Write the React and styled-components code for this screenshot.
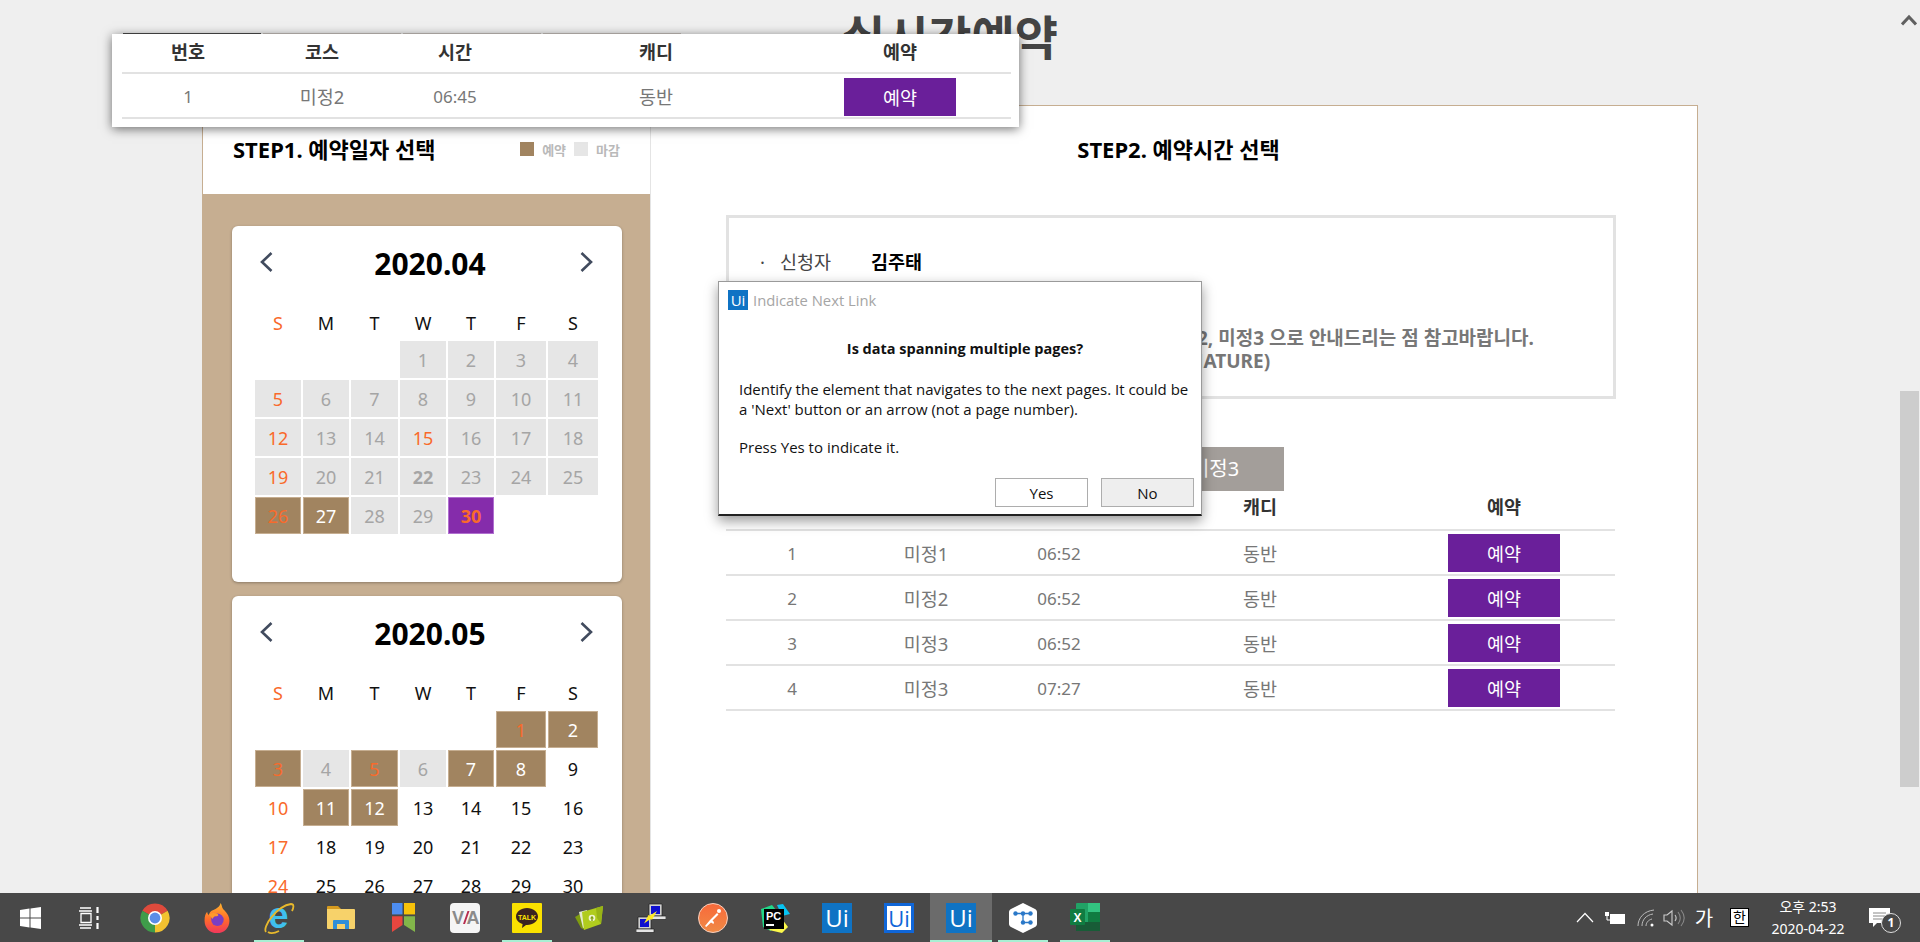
import React from 'react';
import styled, { createGlobalStyle } from 'styled-components';

const GlobalStyle = createGlobalStyle`
  html, body {
    margin: 0;
    height: 100%;
    overflow: hidden;
  }
  body {
    font-family: "Noto Sans", "Noto Sans CJK KR", sans-serif;
    background: #efefef;
  }
`;

const months = [
  { title: '2020.04', offset: 3, total: 30, open: [26, 27], closed: 'rest', today: 30, red: [5, 12, 15, 19, 26, 30], bold: [22] },
  { title: '2020.05', offset: 5, total: 31, open: [1, 2, 3, 5, 7, 8, 11, 12], closed: [4, 6], red: [1, 3, 5, 10, 17, 24, 31], bold: [] },
];

const weekdays = ['S', 'M', 'T', 'W', 'T', 'F', 'S'];

const rows = [
  ['1', '미정1', '06:52'],
  ['2', '미정2', '06:52'],
  ['3', '미정3', '06:52'],
  ['4', '미정3', '07:27'],
];

const cellKind = (month, day) => {
  if (month.today === day) return 'today';
  if (month.open.includes(day)) return 'open';
  if (month.closed === 'rest' || month.closed.includes(day)) return 'closed';
  return 'plain';
};

const Calendar = ({ month }) => {
  const days = Array.from({ length: month.total }, (_, i) => i + 1);
  return (
    <Card>
      <MonthHead>
        <Arrow viewBox="0 0 13 20"><path d="M11.5 1 2 10l9.5 9" /></Arrow>
        <MonthTitle>{month.title}</MonthTitle>
        <Arrow viewBox="0 0 13 20"><path d="M1.5 1 11 10l-9.5 9" /></Arrow>
      </MonthHead>
      <WeekRow>
        {weekdays.map((d, i) => (
          <WeekDay key={i} $red={i === 0}>{d}</WeekDay>
        ))}
      </WeekRow>
      <DayGrid>
        {Array.from({ length: month.offset }, (_, i) => <span key={i} />)}
        {days.map((day) => (
          <Day
            key={day}
            $kind={cellKind(month, day)}
            $red={month.red.includes(day)}
            $bold={month.bold.includes(day)}
          >
            {day}
          </Day>
        ))}
      </DayGrid>
    </Card>
  );
};

const ReserveTable = ({ data }) => (
  <Table>
    <HeadRow>
      <span>번호</span>
      <span>코스</span>
      <span>시간</span>
      <span>캐디</span>
      <span>예약</span>
    </HeadRow>
    {data.map((row) => (
      <BodyRow key={row[0] + row[1] + row[2]}>
        <span>{row[0]}</span>
        <Korean>{row[1]}</Korean>
        <span>{row[2]}</span>
        <Korean>동반</Korean>
        <ReserveButton>예약</ReserveButton>
      </BodyRow>
    ))}
  </Table>
);

/* taskbar icons */
const WindowsIcon = () => (
  <svg width="22" height="24" viewBox="0 0 22 24">
    <path fill="#fff" d="M0 4l9.500-1.400V11.400H0zM10.500 2.400 21 1v10.400H10.500zM0 12.600h9.500v8.800L0 20zM10.500 12.600H21V23l-10.500-1.400z" />
  </svg>
);
const TaskViewIcon = () => (
  <svg width="28" height="24" viewBox="0 0 28 24" fill="none" stroke="#fff" strokeWidth="1.3">
    <path d="M1 2h11M1 22h11M2 7.500h10v9H2zM0 5h13M0 19h13" />
    <path d="M18.500 1v6M18.500 10v4M18.500 17v6" strokeWidth="2.2" />
  </svg>
);
const ChromeIcon = () => (
  <svg width="30" height="30" viewBox="0 0 30 30">
    <path d="M15 15 2.400 7.750A14.500 14.500 0 0 1 27.600 7.750z" fill="#de4a3c" />
    <path d="M15 15 27.600 7.750A14.500 14.500 0 0 1 15 29.500z" fill="#f2c230" />
    <path d="M15 15 15 29.500A14.500 14.500 0 0 1 2.400 7.750z" fill="#3f9c4a" />
    <circle cx="15" cy="15" r="7" fill="#fff" />
    <circle cx="15" cy="15" r="5.400" fill="#5a8de8" />
  </svg>
);
const FirefoxIcon = () => (
  <svg width="30" height="32" viewBox="0 0 30 36">
    <defs>
      <linearGradient id="fx" x1="0" y1="0" x2="0" y2="1">
        <stop offset="0" stopColor="#ffb52e" />
        <stop offset="0.55" stopColor="#ff6b2b" />
        <stop offset="1" stopColor="#f0375c" />
      </linearGradient>
    </defs>
    <path fill="url(#fx)" d="M19 1c2 3 1 5 4 8 4 4 6 8 6 12 0 8-6 14-14 14S1 29 1 21c0-5 1-8 3-10 0 2 1 3 2 4 0-3 2-5 5-6 3-2 7-3 8-8z" />
    <circle cx="15.500" cy="20" r="7" fill="#7b3ec2" />
    <path fill="#ff9a2b" d="M6 14c3-2 6-2 9-1 2 1 2 3 0 3-2 0-4 0-5 3-1-2-3-3-4-5z" />
  </svg>
);
const IeIcon = () => (
  <svg width="32" height="32" viewBox="0 0 32 32">
    <text x="15.500" y="26" textAnchor="middle" fontFamily="Liberation Sans, sans-serif" fontWeight="700" fontSize="36" fill="#3fc0ee">e</text>
    <path fill="none" stroke="#e8b92c" strokeWidth="1.800" d="M3 30C-1 25 14 4 28 2c3 0 3 3 1 7M5 30c3 2 7 1 11-1" />
  </svg>
);
const FolderIcon = () => (
  <svg width="28" height="23" viewBox="0 0 28 23">
    <path fill="#d69a1e" d="M0 1a1 1 0 0 1 1-1h10l3 3H0z" />
    <path fill="#f7d26a" d="M0 3h27a1 1 0 0 1 1 1v18a1 1 0 0 1-1 1H1a1 1 0 0 1-1-1z" />
    <path fill="#2f8fd8" d="M6 15a1 1 0 0 1 1-1h14a1 1 0 0 1 1 1v8h-4v-5h-8v5H6z" />
  </svg>
);
const TilesIcon = () => (
  <svg width="23" height="29" viewBox="0 0 23 33" preserveAspectRatio="none">
    <rect width="10.500" height="13" fill="#4d8df0" />
    <rect x="12" width="11" height="13" fill="#f7c20a" />
    <path fill="#e8463f" d="M0 15h10.500v10L0 33z" />
    <path fill="#82b64a" d="M12 15h11v18l-11-8z" />
  </svg>
);
const ViaIcon = () => (
  <IconSquare $bg="#f5f5f5" $radius="4px">
    <svg width="30" height="30" viewBox="0 0 30 30">
      <text x="2" y="21" fontFamily="Liberation Sans, sans-serif" fontWeight="700" fontSize="18" fill="#8b8b8b">V</text>
      <path d="M17.500 8 13 21h2l4.500-13z" fill="#b72d50" />
      <text x="16.500" y="21" fontFamily="Liberation Sans, sans-serif" fontWeight="700" fontSize="18" fill="#8b8b8b">A</text>
    </svg>
  </IconSquare>
);
const TalkIcon = () => (
  <IconSquare $bg="#fae100" $radius="1px">
    <svg width="30" height="30" viewBox="0 0 30 30">
      <path fill="#3b2320" d="M15 5c6 0 11 3.700 11 8.500S21 22 15 22l-1 0-4 3 .6-4C6.500 19.700 4 17 4 13.500 4 8.700 9 5 15 5z" />
      <text x="15" y="16.500" textAnchor="middle" fontFamily="Liberation Sans, sans-serif" fontWeight="700" fontSize="7" fill="#fae100">TALK</text>
    </svg>
  </IconSquare>
);
const GreenFolderIcon = () => (
  <svg width="28" height="24" viewBox="0 0 28 24">
    <path fill="#7f9c10" d="M0 11l5-3 5 16-4-2z" />
    <path fill="#e3e9cf" d="M4 6l8-2 3 16-7 2z" />
    <path fill="#b0cc1e" d="M7 6l14-4 7-2-2 18-17 6z" />
    <path fill="#98b416" d="M21 2l7-2-2 18-4-6z" />
    <circle cx="17" cy="12" r="3.300" fill="#eef4cf" />
    <path fill="#7f9c10" d="M17 9.700l-2 2.800h1.300V15h1.400v-2.500H19z" />
  </svg>
);
const NetworkIcon = () => (
  <svg width="30" height="30" viewBox="0 0 30 30">
    <path fill="#d0d0d0" stroke="#222" strokeWidth="0.7" d="M13 1h13v12H13z" />
    <rect x="15" y="3" width="9" height="8" fill="#0f0fd0" />
    <path fill="#e4e4e4" stroke="#222" strokeWidth="0.7" d="M15 13h15v3.500H15z" />
    <path fill="#d0d0d0" stroke="#222" strokeWidth="0.7" d="M2 14h13v12H2z" />
    <rect x="4" y="16" width="9" height="8" fill="#0f0fd0" />
    <path fill="#e4e4e4" stroke="#222" strokeWidth="0.7" d="M0 26h18v3.500H0z" />
    <path fill="#ffe926" d="M21 8l-7 4.500-1.500-.5L8 20.500l6.500-4.500 1.500.7z" />
  </svg>
);
const PostmanIcon = () => (
  <svg width="30" height="30" viewBox="0 0 30 30">
    <defs>
      <linearGradient id="pm" x1="0" y1="0" x2="0" y2="1">
        <stop offset="0" stopColor="#f8693a" />
        <stop offset="1" stopColor="#f08a45" />
      </linearGradient>
    </defs>
    <circle cx="15" cy="15" r="14.500" fill="url(#pm)" stroke="#f8d0bf" />
    <circle cx="21" cy="8" r="2" fill="#fff" />
    <path fill="#fff" d="M19 10l-7 7-5 6 1.200 1 4.800-4.500 2.500 1.500.5-2-1.500-1.500 6-6z" />
  </svg>
);
const PyCharmIcon = () => (
  <svg width="30" height="30" viewBox="0 0 30 30">
    <path fill="#21d789" d="M1 6l11-4 4 5-5 21-8-4z" />
    <path fill="#fcf84a" d="M9 27l13 3 6-6-6-8z" />
    <path fill="#07c3f2" d="M17 2l6-1 7 10-8 2z" />
    <rect x="4" y="6" width="20" height="20" fill="#000" />
    <text x="6" y="17" fontFamily="Liberation Sans, sans-serif" fontWeight="700" fontSize="11" fill="#fff">PC</text>
    <rect x="6" y="21" width="8" height="2" fill="#fff" />
  </svg>
);
const UiIcon = ({ $framed }) => (
  <UiSquare $framed={$framed}>
    <UiLetters $framed={$framed}>Ui</UiLetters>
  </UiSquare>
);
const HexIcon = () => (
  <svg width="28" height="30" viewBox="0 0 28 30">
    <path fill="#fff" d="M14 0l12 6c1 .6 2 1.500 2 3v12c0 1.500-1 2.400-2 3l-12 6-12-6c-1-.6-2-1.500-2-3V9c0-1.500 1-2.400 2-3z" />
    <g fill="#2a78c8">
      <circle cx="6.500" cy="10.500" r="2.200" /><circle cx="14" cy="10.500" r="2.200" /><circle cx="21.500" cy="10.500" r="2.200" />
      <circle cx="14" cy="19.500" r="2.200" /><circle cx="21.500" cy="19.500" r="2.200" />
    </g>
    <path stroke="#2a78c8" strokeWidth="1.300" fill="none" d="M6.500 10.500h15M14 10.500v9h7.500" />
  </svg>
);
const ExcelIcon = () => (
  <svg width="30" height="30" viewBox="0 0 30 30">
    <rect x="6" y="0" width="24" height="28" rx="1" fill="#21a366" />
    <rect x="18" y="0" width="12" height="9" fill="#33c481" />
    <rect x="6" y="19" width="24" height="9" fill="#185c37" />
    <rect x="18" y="9" width="12" height="10" fill="#107c41" />
    <rect x="0" y="6" width="15" height="16" rx="1" fill="#107c41" />
    <text x="7.500" y="19" textAnchor="middle" fontFamily="Liberation Sans, sans-serif" fontWeight="700" fontSize="12" fill="#fff">X</text>
  </svg>
);

const taskItems = [
  { id: 'win', icon: <WindowsIcon /> },
  { id: 'view', icon: <TaskViewIcon /> },
  { id: 'chrome', icon: <ChromeIcon /> },
  { id: 'firefox', icon: <FirefoxIcon /> },
  { id: 'ie', icon: <IeIcon />, running: true },
  { id: 'folder', icon: <FolderIcon /> },
  { id: 'tiles', icon: <TilesIcon /> },
  { id: 'via', icon: <ViaIcon /> },
  { id: 'talk', icon: <TalkIcon />, running: true },
  { id: 'green', icon: <GreenFolderIcon /> },
  { id: 'network', icon: <NetworkIcon /> },
  { id: 'postman', icon: <PostmanIcon /> },
  { id: 'pycharm', icon: <PyCharmIcon /> },
  { id: 'ui1', icon: <UiIcon /> },
  { id: 'ui2', icon: <UiIcon $framed /> },
  { id: 'ui3', icon: <UiIcon />, running: true, active: true },
  { id: 'hex', icon: <HexIcon />, running: true },
  { id: 'excel', icon: <ExcelIcon />, running: true },
];

const App = () => (
  <Shell>
    <GlobalStyle />
    <Viewport>
      <Page>
        <PageTitle>실시간예약</PageTitle>
        <Panel>
          <LeftColumn>
            <LeftHead>
              <StepTitle>STEP1. 예약일자 선택</StepTitle>
              <Legend>
                <Swatch $color="#a18460" />
                <span>예약</span>
                <Swatch $color="#e6e6e6" />
                <span>마감</span>
              </Legend>
            </LeftHead>
            <CalendarArea>
              {months.map((m) => (
                <Calendar key={m.title} month={m} />
              ))}
            </CalendarArea>
          </LeftColumn>
          <RightColumn>
            <RightTitle>STEP2. 예약시간 선택</RightTitle>
            <InfoBox>
              <Applicant>
                <Bullet>·</Bullet>
                <span>신청자</span>
                <strong>김주태</strong>
              </Applicant>
              <Notice $indent="468px">2, 미정3 으로 안내드리는 점 참고바랍니다.</Notice>
              <Notice $indent="459px">NATURE)</Notice>
            </InfoBox>
            <TabRow>
              <Tab>미정1</Tab>
              <Tab>미정2</Tab>
              <Tab>미정3</Tab>
              <Tab>미정3</Tab>
            </TabRow>
            <ReserveTable data={rows} />
          </RightColumn>
        </Panel>
      </Page>
      <ScrollTrack>
        <ScrollUp viewBox="0 0 16 12"><path d="M1 10.500 8 3l7 7.500" /></ScrollUp>
        <ScrollThumb />
      </ScrollTrack>
    </Viewport>
    <Taskbar>
      <TaskIcons>
        {taskItems.map((item) => (
          <TaskSlot key={item.id} $running={item.running} $active={item.active}>
            {item.icon}
          </TaskSlot>
        ))}
      </TaskIcons>
      <Tray>
        <TrayItem $w="26px">
          <svg width="18" height="11" viewBox="0 0 18 11" fill="none" stroke="#fff" strokeWidth="1.200"><path d="M1 10 9 1.500 17 10" /></svg>
        </TrayItem>
        <TrayItem $w="34px">
          <svg width="21" height="14" viewBox="0 0 21 14"><path fill="#fff" d="M5 3h15v10H5zM0 1h4v4H0z" /><path stroke="#fff" fill="none" d="M2 5v4h3" /></svg>
        </TrayItem>
        <TrayItem $w="28px">
          <svg width="18" height="18" viewBox="0 0 18 18" fill="none" stroke="#bbb" strokeWidth="1"><path d="M1 17C1 9 7 2 17 1M5 17c0-6 4-11 11-12M9 17c0-3 2-6 6-7" /><circle cx="15" cy="16" r="1.500" fill="#fff" stroke="none" /></svg>
        </TrayItem>
        <TrayItem $w="28px">
          <svg width="22" height="18" viewBox="0 0 22 18" fill="none" stroke="#ccc" strokeWidth="1.100"><path d="M1 6h3l5-4v14l-5-4H1z" /><path d="M12 6c1.500 2 1.500 4 0 6" /><path stroke="#888" d="M15 3c3 4 3 8 0 12M18 1c4 5 4 11 0 16" /></svg>
        </TrayItem>
        <ImeLabel>가</ImeLabel>
        <ImeBox>한</ImeBox>
        <Clock>
          <span>오후 2:53</span>
          <span>2020-04-22</span>
        </Clock>
        <NotifyCell>
          <svg width="21" height="19" viewBox="0 0 21 19"><path fill="#fff" d="M0 0h21v15H8l-4 4v-4H0z" /><path stroke="#888" d="M4 5h13M4 8h13M4 11h9" /></svg>
          <NotifyBadge>1</NotifyBadge>
        </NotifyCell>
      </Tray>
    </Taskbar>

    <FloatingStrip>
      <StripTabs>
        <StripTab $dark />
        <StripTab />
        <StripTab />
        <StripTab />
      </StripTabs>
      <FloatingTable>
        <ReserveTable data={[['1', '미정2', '06:45']]} />
      </FloatingTable>
    </FloatingStrip>

    <Dialog>
      <DialogBar>
        <DialogLogo>Ui</DialogLogo>
        <DialogCaption>Indicate Next Link</DialogCaption>
      </DialogBar>
      <DialogHeading>Is data spanning multiple pages?</DialogHeading>
      <DialogText>
        Identify the element that navigates to the next pages. It could be
        <br />
        a 'Next' button or an arrow (not a page number).
      </DialogText>
      <DialogText $gap>Press Yes to indicate it.</DialogText>
      <DialogButtons>
        <DialogButton>Yes</DialogButton>
        <DialogButton $muted>No</DialogButton>
      </DialogButtons>
    </Dialog>
  </Shell>
);

const Shell = styled.div`
  position: relative;
  height: 100vh;
  display: flex;
  flex-direction: column;
  overflow: hidden;
`;

const Viewport = styled.div`
  flex: 1;
  min-height: 0;
  display: flex;
`;

const Page = styled.main`
  flex: 1;
  min-width: 0;
  overflow: hidden;
`;

const PageTitle = styled.h1`
  margin: 0;
  height: 105px;
  line-height: 74px;
  font-size: 47px;
  font-weight: 700;
  text-align: center;
  color: #444;
`;

const Panel = styled.section`
  width: 1496px;
  margin: 0 auto;
  display: flex;
  background: #fff;
  border: 1px solid #c6ae91;
  box-sizing: border-box;
`;

const LeftColumn = styled.div`
  width: 448px;
  flex: none;
  border-right: 1px solid #e4e4e4;
  box-sizing: border-box;
`;

const LeftHead = styled.div`
  height: 88px;
  padding: 28px 30px 0;
  box-sizing: border-box;
  display: flex;
  justify-content: space-between;
  align-items: flex-start;
`;

const StepTitle = styled.h2`
  margin: 0;
  font-size: 22px;
  line-height: 30px;
  font-weight: 700;
  color: #000;
`;

const Legend = styled.div`
  display: flex;
  align-items: center;
  gap: 8px;
  height: 30px;
  font-size: 13px;
  font-weight: 700;
  color: #b9b9b9;
`;

const Swatch = styled.i`
  width: 14px;
  height: 14px;
  background: ${(p) => p.$color};
`;

const CalendarArea = styled.div`
  background: #c6ae91;
  padding: 32px 28px 20px 29px;
  display: flex;
  flex-direction: column;
  gap: 14px;
`;

const Card = styled.div`
  height: 356px;
  box-sizing: border-box;
  padding: 14px 24px 0 23px;
  background: #fff;
  border-radius: 6px;
  box-shadow: 0 1px 3px rgba(0, 0, 0, 0.3);
`;

const MonthHead = styled.div`
  height: 46px;
  padding: 0 5px;
  display: flex;
  align-items: center;
  justify-content: space-between;
`;

const Arrow = styled.svg`
  width: 13px;
  height: 20px;
  margin-top: -2px;
  fill: none;
  stroke: #414b5e;
  stroke-width: 2.6;
`;

const MonthTitle = styled.div`
  margin-left: 7px;
  font-size: 30px;
  font-weight: 700;
  color: #000;
`;

const columns = '46px 46px 47px 46px 46px 50px 50px';

const WeekRow = styled.div`
  display: grid;
  grid-template-columns: ${columns};
  column-gap: 2px;
  height: 31px;
  margin: 22px 0 2px;
`;

const WeekDay = styled.span`
  text-align: center;
  font-size: 18px;
  line-height: 31px;
  color: ${(p) => (p.$red ? '#f96a2b' : '#111')};
`;

const DayGrid = styled.div`
  display: grid;
  grid-template-columns: ${columns};
  grid-auto-rows: 37px;
  gap: 2px;
`;

const dayBg = { closed: '#e6e6e6', open: '#a18460', today: '#852cab', plain: 'transparent' };
const dayColor = { closed: '#a5a5a5', open: '#fff', today: '#fff', plain: '#111' };

const Day = styled.span`
  display: flex;
  align-items: center;
  justify-content: center;
  font-size: 18px;
  box-sizing: border-box;
  background: ${(p) => dayBg[p.$kind]};
  color: ${(p) => (p.$red ? '#f96a2b' : dayColor[p.$kind])};
  font-weight: ${(p) => (p.$bold || p.$kind === 'today' ? 700 : 400)};
  border: ${(p) => (p.$kind === 'open' ? '1px solid #c6ae91' : p.$kind === 'today' ? '1px solid #b06fd0' : 'none')};
`;

const RightTitle = styled.h2`
  margin: 0;
  padding: 28px 0 0 15px;
  height: 109px;
  box-sizing: border-box;
  font-size: 22px;
  line-height: 30px;
  font-weight: 700;
  text-align: center;
  color: #000;
`;

const InfoBox = styled.div`
  height: 184px;
  box-sizing: border-box;
  border: 3px solid #e2e2e2;
  padding-top: 31px;
`;

const Applicant = styled.div`
  height: 24px;
  display: flex;
  align-items: center;
  padding-left: 31px;
  font-size: 18.5px;
  color: #444;

  strong {
    margin-left: 40px;
    color: #000;
  }
`;

const Bullet = styled.span`
  width: 20px;
`;

const Notice = styled.p`
  margin: 0;
  padding-left: ${(p) => p.$indent};
  font-size: 19px;
  line-height: 23px;
  font-weight: 700;
  color: #777;

  &:first-of-type {
    margin-top: 54px;
  }
`;

const TabRow = styled.div`
  margin-top: 48px;
  display: flex;
  gap: 2px;
`;

const Tab = styled.div`
  width: 138px;
  height: 44px;
  background: #a39e9a;
  color: #fff;
  font-size: 20px;
  line-height: 44px;
  text-align: center;
`;

const Table = styled.div`
  width: 889px;
`;

const tableColumns = '132px 136px 130px 272px 216px';

const HeadRow = styled.div`
  display: grid;
  grid-template-columns: ${tableColumns};
  align-items: center;
  height: 40px;
  box-sizing: border-box;
  padding-bottom: 5px;
  border-bottom: 2px solid #e2e2e2;
  text-align: center;
  font-size: 18.5px;
  font-weight: 700;
  color: #333;
`;

const RightColumn = styled.div`
  flex: 1;
  min-width: 0;
  padding: 0 81px 0 75px;

  ${HeadRow} {
    padding-bottom: 9px;
  }
`;

const BodyRow = styled.div`
  display: grid;
  grid-template-columns: ${tableColumns};
  align-items: center;
  height: 45px;
  box-sizing: border-box;
  padding-top: 1px;
  border-bottom: 2px solid #e2e2e2;
  text-align: center;
  font-size: 17px;
  color: #777;
`;

const Korean = styled.span`
  font-size: 18.5px;
`;

const ReserveButton = styled.button`
  justify-self: center;
  width: 112px;
  height: 38px;
  border: 0;
  padding: 0;
  background: #6a1f9a;
  color: #fff;
  font: inherit;
  font-size: 18.5px;
`;

const ScrollTrack = styled.aside`
  width: 20px;
  flex: none;
  background: #efefef;
`;

const ScrollUp = styled.svg`
  display: block;
  width: 16px;
  height: 12px;
  margin: 14px 0 0 1px;
  fill: none;
  stroke: #606060;
  stroke-width: 3;
`;

const ScrollThumb = styled.div`
  width: 19px;
  height: 396px;
  margin-top: 365px;
  background: #cdcdcd;
`;

const Taskbar = styled.footer`
  height: 49px;
  flex: none;
  background: #484848;
  display: flex;
  justify-content: space-between;
`;

const TaskIcons = styled.div`
  display: flex;
`;

const TaskSlot = styled.div`
  position: relative;
  width: 62px;
  display: flex;
  align-items: center;
  justify-content: center;
  background: ${(p) => (p.$active ? '#6b6b6b' : 'transparent')};

  &::after {
    content: '';
    display: ${(p) => (p.$running ? 'block' : 'none')};
    position: absolute;
    bottom: 0;
    left: ${(p) => (p.$active ? '0' : '6px')};
    right: ${(p) => (p.$active ? '0' : '6px')};
    height: 2px;
    background: #a8efd3;
  }
`;

const IconSquare = styled.div`
  width: 30px;
  height: 30px;
  background: ${(p) => p.$bg};
  border-radius: ${(p) => p.$radius};
`;

const UiSquare = styled.div`
  width: 30px;
  height: 30px;
  box-sizing: border-box;
  background: ${(p) => (p.$framed ? '#fff' : '#0f73c4')};
  border: ${(p) => (p.$framed ? '3px solid #0f66d8' : 'none')};
  display: flex;
  align-items: center;
  justify-content: center;
`;

const UiLetters = styled.span`
  font-family: "Open Sans", sans-serif;
  font-size: ${(p) => (p.$framed ? '22px' : '24px')};
  line-height: 1;
  color: ${(p) => (p.$framed ? '#0f66d8' : '#fff')};
`;

const Tray = styled.div`
  display: flex;
  align-items: stretch;
  padding-right: 17px;
`;

const TrayItem = styled.div`
  width: ${(p) => p.$w};
  display: flex;
  align-items: center;
  justify-content: center;
`;

const ImeLabel = styled.div`
  width: 32px;
  align-self: center;
  text-align: center;
  font-size: 20px;
  color: #fff;
`;

const ImeBox = styled.div`
  align-self: center;
  width: 19px;
  height: 19px;
  margin: 0 12px 0 10px;
  background: #fff;
  border: 1px solid #000;
  box-sizing: border-box;
  color: #000;
  font-size: 14px;
  line-height: 16px;
  text-align: center;
`;

const Clock = styled.div`
  width: 94px;
  display: flex;
  flex-direction: column;
  justify-content: center;
  gap: 3px;
  align-items: center;
  font-size: 14px;
  line-height: 19px;
  color: #fff;
`;

const NotifyCell = styled.div`
  position: relative;
  width: 48px;
  display: flex;
  align-items: center;
  justify-content: center;
`;

const NotifyBadge = styled.span`
  position: absolute;
  left: 26px;
  top: 20px;
  width: 18px;
  height: 18px;
  border: 1.5px solid #ddd;
  border-radius: 50%;
  background: #484848;
  color: #fff;
  font-size: 12px;
  font-weight: 700;
  line-height: 18px;
  text-align: center;
`;

const FloatingStrip = styled.div`
  position: absolute;
  left: 112px;
  top: 33px;
  width: 907px;
`;

const StripTabs = styled.div`
  display: flex;
  gap: 2px;
  padding-left: 11px;
  height: 1px;
`;

const StripTab = styled.i`
  width: 138px;
  background: ${(p) => (p.$dark ? '#3d3d3d' : '#a39e9a')};
`;

const FloatingTable = styled.div`
  background: #fff;
  padding: 0 10px 8px;
  box-shadow: 0 2px 10px rgba(0, 0, 0, 0.55);

  ${ReserveButton} {
    margin-top: 2px;
  }
`;

const Dialog = styled.div`
  position: absolute;
  left: 718px;
  top: 281px;
  width: 484px;
  height: 235px;
  box-sizing: border-box;
  background: #fff;
  border: 1px solid #9a9a9a;
  border-bottom: 2px solid #222;
  box-shadow: 0 5px 12px rgba(0, 0, 0, 0.4);
  font-family: "Open Sans", sans-serif;
  color: #111;
`;

const DialogBar = styled.div`
  display: flex;
  align-items: center;
  gap: 5px;
  padding: 8px 0 0 9px;
`;

const DialogLogo = styled.span`
  width: 20px;
  height: 20px;
  background: #0f73c4;
  color: #fff;
  font-size: 15px;
  line-height: 20px;
  text-align: center;
`;

const DialogCaption = styled.span`
  font-size: 14.8px;
  color: #a5a5a5;
`;

const DialogHeading = styled.div`
  margin-top: 29px;
  padding-left: 10px;
  font-size: 14.5px;
  line-height: 20px;
  font-weight: 700;
  text-align: center;
`;

const DialogText = styled.p`
  margin: ${(p) => (p.$gap ? '18px' : '20px')} 0 0;
  padding-left: 20px;
  font-size: 15px;
  line-height: 20px;
  white-space: nowrap;
`;

const DialogButtons = styled.div`
  position: absolute;
  right: 7px;
  bottom: 7px;
  display: flex;
  gap: 13px;
`;

const DialogButton = styled.button`
  width: 93px;
  height: 29px;
  padding: 0;
  background: ${(p) => (p.$muted ? '#eee' : '#fff')};
  border: 1px solid #adadad;
  font: inherit;
  font-size: 15px;
  color: #111;
`;

export default App;
